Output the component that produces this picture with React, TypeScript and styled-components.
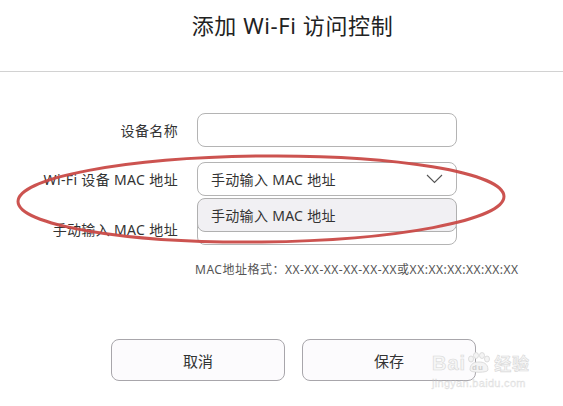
import React from "react";
import styled, { createGlobalStyle } from "styled-components";

const Global = createGlobalStyle`
  html, body { margin: 0; padding: 0; background: #ffffff; }
  body { font-family: "Noto Sans", "Noto Sans CJK SC", sans-serif; }
  * { box-sizing: border-box; }
`;

const Page = styled.div`
  position: relative;
  width: 563px;
  height: 406px;
  overflow: hidden;
  background: #ffffff;
`;

const Header = styled.div`
  height: 72px;
  border-bottom: 1px solid #d2d2d2;
  display: flex;
  justify-content: center;
  align-items: flex-start;
  padding: 8px 0 0 22px;
`;

const Title = styled.h1`
  margin: 0;
  font-size: 22px;
  font-weight: 400;
  line-height: 34px;
  color: #222222;
  letter-spacing: 0.6px;
`;

const Form = styled.div`
  display: grid;
  grid-template-columns: 178px 260px;
  column-gap: 19px;
  row-gap: 15px;
  padding-top: 41px;
  position: relative;
`;

const Label = styled.div<{ $shift?: number }>`
  font-size: 14px;
  color: #333333;
  text-align: right;
  display: flex;
  align-items: center;
  justify-content: flex-end;
  height: 34px;
  white-space: nowrap;
  letter-spacing: 0.35px;
  padding-top: ${(p) => p.$shift ?? 0}px;
`;

const Field = styled.div`
  position: relative;
  height: 34px;
  border: 1px solid #b4b4b4;
  border-radius: 8px;
  background: #ffffff;
  display: flex;
  align-items: center;
  padding: 0 13px;
  font-size: 14px;
  color: #333333;
  letter-spacing: 0.3px;
`;

const SelectText = styled.span`
  flex: 1;
`;

const Menu = styled.div`
  position: absolute;
  left: -1px;
  right: -1px;
  top: 35px;
  height: 34px;
  border: 1px solid #b0b0b0;
  border-radius: 8px;
  background: #f1f0f3;
  display: flex;
  align-items: center;
  padding: 0 13px;
  font-size: 14px;
  color: #333333;
  z-index: 2;
`;

const Help = styled.div`
  margin-top: 16px;
  padding-left: 195px;
  font-size: 12px;
  line-height: 18px;
  color: #555555;
  white-space: nowrap;
  letter-spacing: 0.5px;
`;

const Buttons = styled.div`
  display: flex;
  gap: 17px;
  margin-top: 60px;
  padding-left: 111px;
`;

const Button = styled.button`
  width: 174px;
  height: 42px;
  border: 1px solid #a8a6ab;
  border-radius: 8px;
  background: #fcfbfd;
  font-family: "Noto Sans CJK SC", sans-serif;
  font-size: 15px;
  color: #333333;
`;

const Overlay = styled.svg`
  position: absolute;
  left: 0;
  top: 0;
  pointer-events: none;
  z-index: 5;
`;

const Watermark = styled.div`
  position: absolute;
  left: 432px;
  top: 352px;
  z-index: 4;
  color: #e4e4e4;
  font-family: "Liberation Sans", sans-serif;
  display: flex;
  flex-direction: column;
  align-items: flex-start;
`;

const Brand = styled.div`
  display: flex;
  align-items: center;
  font-size: 20px;
  font-weight: 700;
  letter-spacing: 1px;
  -webkit-text-stroke: 0.6px #d8d8d8;
  color: #f6f6f6;
  line-height: 22px;
`;

const BrandCn = styled.span`
  font-family: "Noto Sans CJK SC", sans-serif;
  font-size: 17px;
  margin-left: 4px;
`;

const Domain = styled.div`
  font-size: 11px;
  margin-top: 3px;
  color: #ececec;
  -webkit-text-stroke: 0.3px #dcdcdc;
  letter-spacing: 0.3px;
`;

export default function App() {
  return (
    <>
      <Global />
      <Page>
        <Header>
          <Title>添加 Wi-Fi 访问控制</Title>
        </Header>
        <Form>
          <Label>设备名称</Label>
          <Field />
          <Label>Wi-Fi 设备 MAC 地址</Label>
          <Field>
            <SelectText>手动输入 MAC 地址</SelectText>
            <svg width="17" height="10" viewBox="0 0 17 10">
              <path d="M1 1 L8.5 8.5 L16 1" fill="none" stroke="#555" strokeWidth="1.1" />
            </svg>
            <Menu>手动输入 MAC 地址</Menu>
          </Field>
          <Label $shift={2}>手动输入 MAC 地址</Label>
          <Field />
        </Form>
        <Help>MAC地址格式：XX-XX-XX-XX-XX-XX或XX:XX:XX:XX:XX:XX</Help>
        <Buttons>
          <Button>取消</Button>
          <Button>保存</Button>
        </Buttons>
        <Watermark>
          <Brand>
            Bai
            <svg width="24" height="22" viewBox="0 0 24 22">
              <g fill="#f4f4f4" stroke="#d6d6d6" strokeWidth="0.8">
                <ellipse cx="5" cy="7" rx="2.5" ry="3" />
                <ellipse cx="10" cy="3.5" rx="2.5" ry="3" />
                <ellipse cx="16" cy="3.5" rx="2.5" ry="3" />
                <ellipse cx="21" cy="7" rx="2.5" ry="3" />
                <path d="M4 18 C4 11 9 10 13 10 C17 10 22 11 22 18 C22 21 4 21 4 18 Z" />
              </g>
              <text x="6" y="18" fontSize="8" fill="#cfcfcf" stroke="none" fontFamily="Liberation Sans">du</text>
            </svg>
            <BrandCn>经验</BrandCn>
          </Brand>
          <Domain>jingyan.baidu.com</Domain>
        </Watermark>
        <Overlay width="563" height="406" viewBox="0 0 563 406">
          <ellipse
            cx="261"
            cy="199"
            rx="243"
            ry="43"
            transform="rotate(-0.6 261 199)"
            fill="none"
            stroke="#c94a47"
            strokeWidth="3"
            opacity="0.95"
          />
        </Overlay>
      </Page>
    </>
  );
}
